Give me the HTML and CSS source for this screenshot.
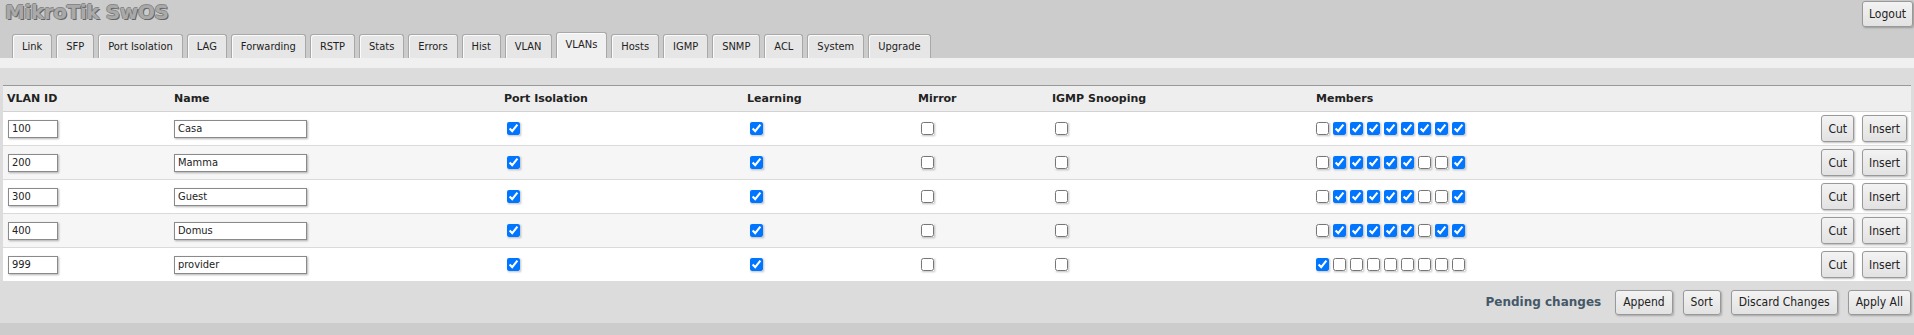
FILE: index.html
```html
<!DOCTYPE html>
<html>
<head>
  <title>MikroTik SwOS</title>
  <link rel="stylesheet" href="styles.css">
</head>

<body>
  <div class="top">
    <h1 class="logo">MikroTik SwOS</h1>
    <button type="button" class="btn logout">Logout</button>
  </div>

  <div class="tabs">
    <span class="tab">Link</span>
    <span class="tab">SFP</span>
    <span class="tab">Port Isolation</span>
    <span class="tab">LAG</span>
    <span class="tab">Forwarding</span>
    <span class="tab">RSTP</span>
    <span class="tab">Stats</span>
    <span class="tab">Errors</span>
    <span class="tab">Hist</span>
    <span class="tab">VLAN</span>
    <span class="tab tab-active">VLANs</span>
    <span class="tab">Hosts</span>
    <span class="tab">IGMP</span>
    <span class="tab">SNMP</span>
    <span class="tab">ACL</span>
    <span class="tab">System</span>
    <span class="tab">Upgrade</span>
  </div>

  <div class="panel">
    <div class="panel-top"></div>
    <div class="toolbar"></div>

    <table class="vlan-table">
      <colgroup>
        <col class="c-id">
        <col class="c-name">
        <col class="c-iso">
        <col class="c-learn">
        <col class="c-mirror">
        <col class="c-igmp">
        <col>
        <col class="c-act">
      </colgroup>
      <tr>
        <th>VLAN ID</th>
        <th>Name</th>
        <th>Port Isolation</th>
        <th>Learning</th>
        <th>Mirror</th>
        <th>IGMP Snooping</th>
        <th>Members</th>
        <th></th>
      </tr>
      <tr>
        <td><input type="text" class="in-id" value="100"></td>
        <td><input type="text" class="in-name" value="Casa"></td>
        <td><input type="checkbox" checked></td>
        <td><input type="checkbox" checked></td>
        <td><input type="checkbox"></td>
        <td><input type="checkbox"></td>
        <td class="members">
          <input type="checkbox"><input type="checkbox" checked><input type="checkbox" checked><input type="checkbox" checked><input type="checkbox" checked><input type="checkbox" checked><input type="checkbox" checked><input type="checkbox" checked><input type="checkbox" checked>
        </td>
        <td class="actions"><button type="button" class="btn">Cut</button><button type="button" class="btn">Insert</button></td>
      </tr>
      <tr>
        <td><input type="text" class="in-id" value="200"></td>
        <td><input type="text" class="in-name" value="Mamma"></td>
        <td><input type="checkbox" checked></td>
        <td><input type="checkbox" checked></td>
        <td><input type="checkbox"></td>
        <td><input type="checkbox"></td>
        <td class="members">
          <input type="checkbox"><input type="checkbox" checked><input type="checkbox" checked><input type="checkbox" checked><input type="checkbox" checked><input type="checkbox" checked><input type="checkbox"><input type="checkbox"><input type="checkbox" checked>
        </td>
        <td class="actions"><button type="button" class="btn">Cut</button><button type="button" class="btn">Insert</button></td>
      </tr>
      <tr>
        <td><input type="text" class="in-id" value="300"></td>
        <td><input type="text" class="in-name" value="Guest"></td>
        <td><input type="checkbox" checked></td>
        <td><input type="checkbox" checked></td>
        <td><input type="checkbox"></td>
        <td><input type="checkbox"></td>
        <td class="members">
          <input type="checkbox"><input type="checkbox" checked><input type="checkbox" checked><input type="checkbox" checked><input type="checkbox" checked><input type="checkbox" checked><input type="checkbox"><input type="checkbox"><input type="checkbox" checked>
        </td>
        <td class="actions"><button type="button" class="btn">Cut</button><button type="button" class="btn">Insert</button></td>
      </tr>
      <tr>
        <td><input type="text" class="in-id" value="400"></td>
        <td><input type="text" class="in-name" value="Domus"></td>
        <td><input type="checkbox" checked></td>
        <td><input type="checkbox" checked></td>
        <td><input type="checkbox"></td>
        <td><input type="checkbox"></td>
        <td class="members">
          <input type="checkbox"><input type="checkbox" checked><input type="checkbox" checked><input type="checkbox" checked><input type="checkbox" checked><input type="checkbox" checked><input type="checkbox"><input type="checkbox" checked><input type="checkbox" checked>
        </td>
        <td class="actions"><button type="button" class="btn">Cut</button><button type="button" class="btn">Insert</button></td>
      </tr>
      <tr>
        <td><input type="text" class="in-id" value="999"></td>
        <td><input type="text" class="in-name" value="provider"></td>
        <td><input type="checkbox" checked></td>
        <td><input type="checkbox" checked></td>
        <td><input type="checkbox"></td>
        <td><input type="checkbox"></td>
        <td class="members">
          <input type="checkbox" checked><input type="checkbox"><input type="checkbox"><input type="checkbox"><input type="checkbox"><input type="checkbox"><input type="checkbox"><input type="checkbox"><input type="checkbox">
        </td>
        <td class="actions"><button type="button" class="btn">Cut</button><button type="button" class="btn">Insert</button></td>
      </tr>
    </table>

    <div class="footer">
      <span class="pending">Pending changes</span>
      <button type="button" class="btn btn-foot">Append</button>
      <button type="button" class="btn btn-foot">Sort</button>
      <button type="button" class="btn btn-foot">Discard Changes</button>
      <button type="button" class="btn btn-foot">Apply All</button>
    </div>
  </div>
  <div class="bottom"></div>
</body>
</html>
```

FILE: styles.css
```css
body {
  font-family: "DejaVu Sans Condensed", "DejaVu Sans", sans-serif;
  font-stretch: condensed;
  font-size: 11px;
  color: #222;
  background-color: #cccccc;
  margin: 0;
}

.top {
  display: flex;
  justify-content: space-between;
  align-items: flex-start;
  height: 30px;
}

.logo {
  margin: 0;
  padding: 1px 0 0 5px;
  font-family: "DejaVu Sans", sans-serif;
  font-stretch: normal;
  font-size: 20px;
  line-height: 23px;
  font-weight: bold;
  color: #a9a9a9;
  text-shadow: 1px 1px 0 #666, -1px 0 0 #888, 0 -1px 0 #888;
  letter-spacing: -0.4px;
}

.btn {
  font-family: "DejaVu Sans Condensed", "DejaVu Sans", sans-serif;
  font-stretch: condensed;
  font-size: 12px;
  color: #222;
  height: 27px;
  padding: 0 6px;
  border: 1px solid #999;
  border-radius: 3px;
  background: linear-gradient(#f3f3f3, #e2e2e2);
  box-shadow: 1px 1px 2px rgba(0, 0, 0, 0.25);
  cursor: pointer;
}

.logout {
  height: 26px;
  margin: 1px 1px 0 0;
}

.tabs {
  display: flex;
  align-items: flex-end;
  gap: 4px;
  padding-left: 12px;
  margin-top: 2px;
}

.tab {
  height: 23px;
  line-height: 23px;
  padding: 0 9px;
  border: 1px solid #a8a8a8;
  border-bottom: none;
  border-radius: 3px 3px 0 0;
  background-color: #e6e6e6;
  box-shadow: inset 1px 1px 0 #fbfbfb;
}

.tab-active {
  height: 25px;
  background-color: #f0f0f0;
}

.panel {
  background-color: #dcdcdc;
  padding: 0 3px;
}

.panel-top {
  height: 10px;
  margin: 0 -3px;
  background-color: #f0f0f0;
}

.toolbar {
  height: 17px;
}

.vlan-table {
  width: 100%;
  border-collapse: collapse;
  table-layout: fixed;
  border-top: 1px solid #999;
}

.c-id { width: 167px; }
.c-name { width: 330px; }
.c-iso { width: 243px; }
.c-learn { width: 171px; }
.c-mirror { width: 134px; }
.c-igmp { width: 264px; }
.c-act { width: 110px; }

.vlan-table th {
  height: 25px;
  padding: 0 4px;
  text-align: left;
  font-family: "DejaVu Sans", sans-serif;
  font-stretch: normal;
  font-weight: bold;
  background-color: #eeeeee;
  border-bottom: 1px solid #d2d2d2;
}

.vlan-table td {
  height: 33px;
  padding: 0 4px;
  background-color: #fff;
  border-bottom: 1px solid #dadada;
  white-space: nowrap;
}

.vlan-table tr:nth-child(odd) td {
  background-color: #f6f6f6;
}

.vlan-table tr:last-child td {
  border-bottom: none;
}

input[type="text"] {
  font-family: "DejaVu Sans Condensed", "DejaVu Sans", sans-serif;
  font-stretch: condensed;
  font-size: 11px;
  color: #222;
  height: 18px;
  padding: 0 3px;
  border: 1px solid #8a8a8a;
  box-sizing: border-box;
  box-shadow: 1px 1px 2px rgba(0, 0, 0, 0.3);
  background: #fff;
  vertical-align: middle;
}

.in-id {
  width: 50px;
  margin-left: 1px;
}

.in-name {
  width: 133px;
}

input[type="checkbox"] {
  width: 13px;
  height: 13px;
  margin: 0 0 0 3px;
  vertical-align: middle;
  box-shadow: 1px 1px 2px rgba(0, 0, 0, 0.25);
}

.members input[type="checkbox"] {
  margin: 0 4px 0 0;
}

.members {
  padding-left: 6px;
  font-size: 0;
}

.actions {
  text-align: right;
  font-size: 0;
}

.actions .btn {
  margin-left: 8px;
}

.footer {
  height: 42px;
  display: flex;
  justify-content: flex-end;
  align-items: center;
  gap: 10px;
}

.pending {
  font-family: "DejaVu Sans", sans-serif;
  font-stretch: normal;
  font-weight: bold;
  font-size: 12px;
  color: #455868;
  margin-right: 4px;
}

.btn-foot {
  height: 25px;
  padding: 0 7px;
}

.bottom {
  height: 12px;
}
```
